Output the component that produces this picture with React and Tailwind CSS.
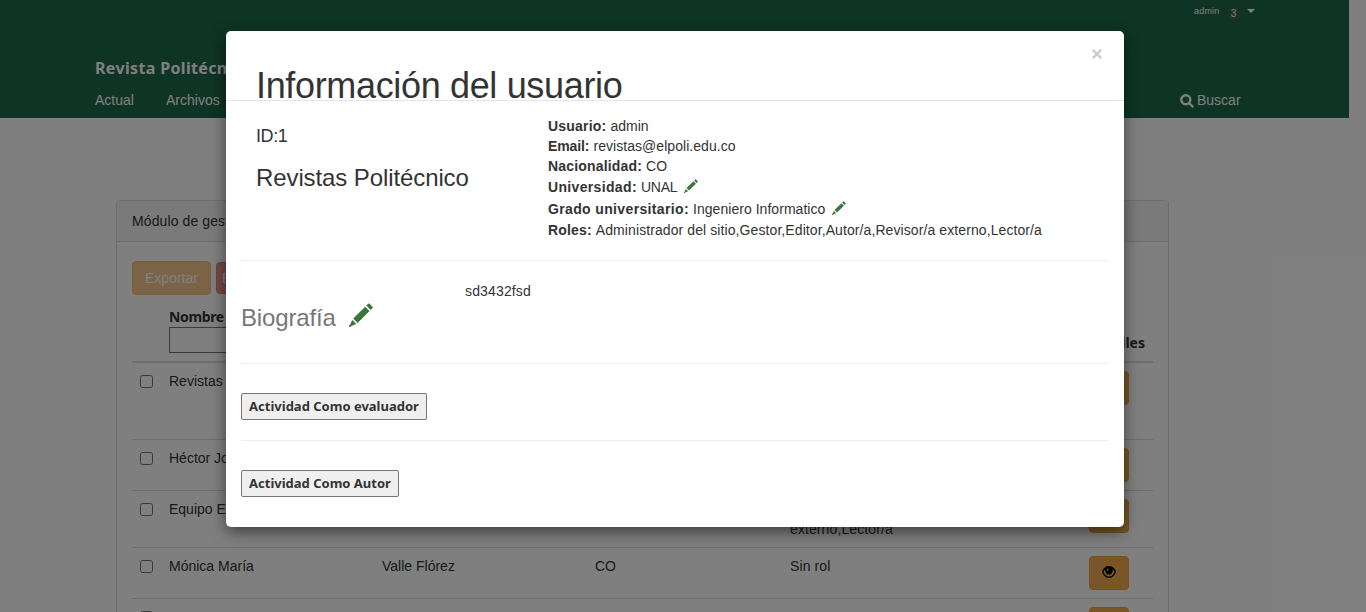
import React from "react";

const T = ({ className = "", children }) => <span className={"whitespace-pre " + className}>{children}</span>;

function Pencil({ className }) {
  return (
    <svg viewBox="0 0 24 24" className={className} fill="#3c763d">
      <path d="M19.200.8Q19.900.1 20.600.8L23.500 3.700Q24.200 4.400 23.500 5.100L21.700 6.900 17.300 2.600ZM16.200 3.700 20.500 8 8.600 19.900 4.300 15.600ZM3.300 17 7.200 20.900 2.800 22.800 1.200 24 0 24 0 22.800 1.300 21.200Z" />
    </svg>
  );
}

function Eye() {
  return (
    <svg viewBox="0 0 14 12" className="mb-0.5 h-3 w-3.5">
      <path fillRule="evenodd" d="M7 0C3.600 0 1 2.500 0 5.500 1 9 3.600 12 7 12s6-3 7-6.500C13 2.500 10.400 0 7 0ZM7 10.600C4.400 10.600 2.400 8.600 1.500 6 1.900 4.800 2.500 3.700 3.400 2.900 3 6.500 4.600 8.600 7 8.600s4-2.100 3.600-5.700C11.500 3.700 12.100 4.800 12.500 6 11.600 8.600 9.600 10.600 7 10.600ZM6 2.500A2 2 0 0 0 4.800 4.500L5.800 4.800 7 3Z" fill="#000" />
    </svg>
  );
}

function Row({ height, name, surname, country, role }) {
  return (
    <tr className={"align-top " + height}>
      <td className="border-t border-[#ddd] pt-3 pl-2">
        <div className="h-[13px] w-[13px] rounded-[2.5px] border border-[#767676] bg-white" />
      </td>
      <td className="border-t border-[#ddd] pt-2 pl-2">{name}</td>
      <td className="border-t border-[#ddd] pt-2 pl-2">{surname}</td>
      <td className="border-t border-[#ddd] pt-2 pl-2">{country}</td>
      <td className="border-t border-[#ddd] pt-2 pl-2 tracking-[0.1px]">{role}</td>
      <td className="border-t border-[#ddd] pt-2 pl-2">
        <div className="flex h-[34px] w-10 items-center justify-center rounded border border-[#eea236] bg-[#f0ad4e]">
          <Eye />
        </div>
      </td>
    </tr>
  );
}

function Field({ label, value, edit, className, labelClass = "", valueClass = "" }) {
  return (
    <div className={"flex items-center " + className}>
      <b className={"whitespace-pre " + labelClass}>{label}</b>
      <span className={"ml-1 whitespace-pre " + valueClass}>{value}</span>
      {edit && <Pencil className="mb-0.5 ml-[7px] h-3.5 w-3.5" />}
    </div>
  );
}

export default function App() {
  return (
    <div className="relative h-[612px] w-[1366px] overflow-hidden bg-white font-['Liberation_Sans',sans-serif] text-sm leading-5 text-[#333]">
      <header className="flex h-[118px] w-[1349px] flex-col bg-[#1a6848] pl-[95px] text-white">
        <div className="flex h-[58px] items-start pt-1 pl-[1099px] text-[9px] leading-[14px]">
          <span className="tracking-[0.2px]">admin</span>
          <span className="mt-[3px] ml-[7px] flex h-3.5 w-3.5 items-center justify-center rounded-full bg-[#35644f] text-[10px]">3</span>
          <svg viewBox="0 0 8 4" className="mt-[5px] ml-1.5 h-1 w-2" fill="#fff"><path d="M0 0h8L4 4Z" /></svg>
        </div>
        <div className="h-8 font-['Noto_Sans',sans-serif] text-base leading-5 font-bold tracking-[0.35px]">Revista Politécnico</div>
        <nav className="flex items-center">
          <span className="w-[71px]">Actual</span>
          <span className="w-[1014px]">Archivos</span>
          <svg viewBox="0 0 14 14" className="mt-px mr-[3px] h-3.5 w-3.5" fill="none" stroke="#fff" strokeWidth="2.400">
            <circle cx="5.800" cy="5.800" r="4.500" /><path d="m9 9 4.200 4.200" />
          </svg>
          <span>Buscar</span>
        </nav>
      </header>
      <main className="mt-[82px] ml-[116px] w-[1053px] rounded border border-[#ddd]">
        <div className="h-[41px] rounded-t border-b border-[#ddd] bg-[#f5f5f5] pt-2.5 pl-[15px] tracking-[0.1px]">Módulo de gestión de usuarios</div>
        <div className="px-[15px] pt-[19px]">
          <div className="flex items-center gap-[5px] text-white opacity-65">
            <div className="flex h-[34px] w-[79px] items-center justify-center rounded border border-[#eea236] bg-[#f0ad4e]">Exportar</div>
            <div className="h-8 w-20 rounded border border-[#d43f3a] bg-[#d9534f] pt-[5px] pl-[5px]">Eliminar</div>
          </div>
          <table className="mt-3 w-[1021px] table-fixed border-collapse">
            <colgroup>
              <col className="w-[29px]" /><col className="w-[213px]" /><col className="w-[213px]" /><col className="w-[195px]" /><col className="w-[299px]" /><col />
            </colgroup>
            <thead>
              <tr className="h-[55px] align-top font-['Noto_Sans',sans-serif]">
                <th className="border-b-2 border-[#ddd]" />
                <th className="border-b-2 border-[#ddd] pl-2 text-left">
                  <T className="tracking-[-0.35px]">Nombre</T>
                  <div className="h-[26px] w-[180px] border border-[#767676] bg-white" />
                </th>
                <th className="border-b-2 border-[#ddd]" /><th className="border-b-2 border-[#ddd]" /><th className="border-b-2 border-[#ddd]" />
                <th className="border-b-2 border-[#ddd] pt-[26px] pr-2 text-right">Detalles</th>
              </tr>
            </thead>
            <tbody>
              <Row height="h-[77px]" name="Revistas" surname="Politécnico" country="CO" role="Administrador" />
              <Row height="h-[51px]" name="Héctor José" surname="" country="CO" role="Lector/a" />
              <Row height="h-[57px]" name="Equipo Editorial" surname="" country="CO" role={<>Autor/a,Revisor/a<br />externo,Lector/a</>} />
              <Row height="h-[51px]" name="Mónica María" surname="Valle Flórez" country="CO" role="Sin rol" />
              <Row height="h-[51px]" name="" surname="" country="" role="" />
            </tbody>
          </table>
        </div>
      </main>
      <div className="absolute inset-0 bg-black/50" />
      <section role="dialog" className="absolute top-[31px] left-[226px] h-[496px] w-[898px] rounded-[5px] bg-white shadow-[0_5px_15px_rgba(0,0,0,0.5)]">
        <div className="flex h-[70px] justify-between border-b border-[#e5e5e5] pt-[35px] pr-[22px] pl-[30px]">
          <h1 className="text-4xl leading-10 tracking-[-0.34px]">Información del usuario</h1>
          <svg viewBox="0 0 10 10" className="-mt-[17px] h-2.5 w-2.5" stroke="#ccc" strokeWidth="2.300" fill="none"><path d="m.7.7 8.600 8.600m0-8.600L.7 9.300" /></svg>
        </div>
        <div className="px-[15px]">
          <div className="flex h-[160px] border-b border-[#eee] pl-[15px]">
            <div className="w-[292px]">
              <h4 className="mt-[25px] text-lg leading-5 tracking-[-0.4px]">ID:1</h4>
              <h3 className="mt-[19px] text-2xl leading-[26px] tracking-[-0.1px]">Revistas Politécnico</h3>
            </div>
            <div className="pt-[15px]">
              <Field className="h-5" label="Usuario:" value="admin" labelClass="tracking-[0.2px]" />
              <Field className="h-5" label="Email:" value="revistas@elpoli.edu.co" labelClass="tracking-[-0.1px]" valueClass="tracking-[0.05px]" />
              <Field className="h-5" label="Nacionalidad:" value="CO" labelClass="tracking-[0.17px]" />
              <Field className="h-[22px]" label="Universidad:" value="UNAL" edit labelClass="tracking-[0.34px]" valueClass="tracking-[-0.2px]" />
              <Field className="h-[22px]" label="Grado universitario:" value="Ingeniero Informatico" edit labelClass="tracking-[0.36px]" valueClass="tracking-[0.04px]" />
              <Field className="h-5" label="Roles:" value="Administrador del sitio,Gestor,Editor,Autor/a,Revisor/a externo,Lector/a" labelClass="tracking-[0.17px]" valueClass="tracking-[0.09px]" />
            </div>
          </div>
          <div className="flex h-[103px] border-b border-[#eee]">
            <div className="flex w-56 items-start pt-11 text-2xl leading-[26px] text-[#777]">
              <T className="tracking-[-0.15px]">Biografía</T>
              <Pencil className="-mt-0.5 ml-[13px] h-6 w-6" />
            </div>
            <div className="pt-5 tracking-[0.15px]">sd3432fsd</div>
          </div>
          <div className="h-[77px] border-b border-[#eee] pt-[29px]">
            <button className="flex h-[27px] w-[186px] items-center justify-center rounded-[2px] border border-[#767676] bg-[#efefef] pb-0.5 font-['Noto_Sans',sans-serif] text-[13px] font-bold"><T>Actividad Como evaluador</T></button>
          </div>
          <div className="pt-[29px]">
            <button className="flex h-[27px] w-[158px] items-center justify-center rounded-[2px] border border-[#767676] bg-[#efefef] pb-0.5 font-['Noto_Sans',sans-serif] text-[13px] font-bold"><T>Actividad Como Autor</T></button>
          </div>
        </div>
      </section>
    </div>
  );
}
